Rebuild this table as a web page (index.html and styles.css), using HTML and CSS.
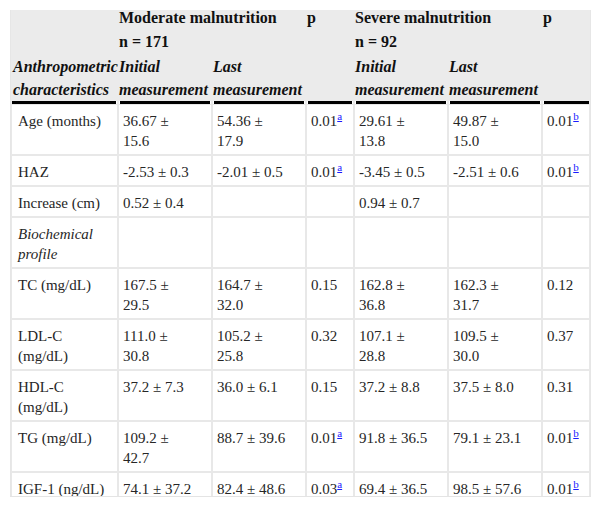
FILE: index.html
```html
<!DOCTYPE html>
<html lang="en">
<head>
<meta charset="utf-8">
<title>Anthropometric characteristics</title>
<link rel="stylesheet" href="styles.css">
</head>
<body>
<div class="table-wrap">
<table class="data">
  <colgroup>
    <col class="c-label">
    <col class="c-val">
    <col class="c-val">
    <col class="c-p">
    <col class="c-val">
    <col class="c-val">
    <col class="c-p">
  </colgroup>
  <thead>
    <tr class="h1">
      <th class="first"></th>
      <th colspan="2">Moderate malnutrition</th>
      <th>p</th>
      <th colspan="2">Severe malnutrition</th>
      <th>p</th>
    </tr>
    <tr class="h2">
      <th class="first"></th>
      <th colspan="2">n = 171</th>
      <th></th>
      <th colspan="2">n = 92</th>
      <th></th>
    </tr>
    <tr class="h3">
      <th class="first">Anthropometric characteristics</th>
      <th>Initial measurement</th>
      <th>Last measurement</th>
      <th></th>
      <th>Initial measurement</th>
      <th>Last measurement</th>
      <th class="last"></th>
    </tr>
  </thead>
  <tbody>
    <tr>
      <td class="label">Age (months)</td>
      <td>36.67 ± 15.6</td>
      <td>54.36 ± 17.9</td>
      <td>0.01<sup><a href="#">a</a></sup></td>
      <td>29.61 ± 13.8</td>
      <td>49.87 ± 15.0</td>
      <td>0.01<sup><a href="#">b</a></sup></td>
    </tr>
    <tr>
      <td class="label">HAZ</td>
      <td>-2.53 ± 0.3</td>
      <td>-2.01 ± 0.5</td>
      <td>0.01<sup><a href="#">a</a></sup></td>
      <td>-3.45 ± 0.5</td>
      <td>-2.51 ± 0.6</td>
      <td>0.01<sup><a href="#">b</a></sup></td>
    </tr>
    <tr>
      <td class="label">Increase (cm)</td>
      <td>0.52 ± 0.4</td>
      <td></td>
      <td></td>
      <td>0.94 ± 0.7</td>
      <td></td>
      <td></td>
    </tr>
    <tr>
      <td class="label"><em>Biochemical profile</em></td>
      <td></td>
      <td></td>
      <td></td>
      <td></td>
      <td></td>
      <td></td>
    </tr>
    <tr>
      <td class="label">TC (mg/dL)</td>
      <td>167.5 ± 29.5</td>
      <td>164.7 ± 32.0</td>
      <td>0.15</td>
      <td>162.8 ± 36.8</td>
      <td>162.3 ± 31.7</td>
      <td>0.12</td>
    </tr>
    <tr>
      <td class="label">LDL-C (mg/dL)</td>
      <td>111.0 ± 30.8</td>
      <td>105.2 ± 25.8</td>
      <td>0.32</td>
      <td>107.1 ± 28.8</td>
      <td>109.5 ± 30.0</td>
      <td>0.37</td>
    </tr>
    <tr>
      <td class="label">HDL-C (mg/dL)</td>
      <td>37.2 ± 7.3</td>
      <td>36.0 ± 6.1</td>
      <td>0.15</td>
      <td>37.2 ± 8.8</td>
      <td>37.5 ± 8.0</td>
      <td>0.31</td>
    </tr>
    <tr>
      <td class="label">TG (mg/dL)</td>
      <td>109.2 ± 42.7</td>
      <td>88.7 ± 39.6</td>
      <td>0.01<sup><a href="#">a</a></sup></td>
      <td>91.8 ± 36.5</td>
      <td>79.1 ± 23.1</td>
      <td>0.01<sup><a href="#">b</a></sup></td>
    </tr>
    <tr>
      <td class="label">IGF-1 (ng/dL)</td>
      <td>74.1 ± 37.2</td>
      <td>82.4 ± 48.6</td>
      <td>0.03<sup><a href="#">a</a></sup></td>
      <td>69.4 ± 36.5</td>
      <td>98.5 ± 57.6</td>
      <td>0.01<sup><a href="#">b</a></sup></td>
    </tr>
  </tbody>
</table>
</div>
</body>
</html>
```

FILE: styles.css
```css
html, body {
  margin: 0;
  padding: 0;
  background: #fff;
}

body {
  font-family: "Liberation Serif", "Times New Roman", serif;
  font-size: 15px;
  color: #262626;
}

.table-wrap {
  margin: 10px 0 0 10px;
  width: 581px;
  height: 487px;
  overflow: hidden;
  box-sizing: border-box;
  border-bottom: 1px solid #e4e4e4;
}

.data {
  width: 581px;
  table-layout: fixed;
  border-collapse: separate;
  border-spacing: 0;
  border-left: 1px solid #e6e6e6;
  border-right: 1px solid #e6e6e6;
}

.c-label { width: 107px; }
.c-val { width: 94px; }
.c-p { width: 48px; }

.data th,
.data td {
  box-sizing: border-box;
  text-align: left;
  vertical-align: top;
}

.data th {
  background: #ebebeb;
  color: #111;
  font-size: 16px;
  font-weight: bold;
  padding: 0;
  border-left: 1px solid #ebebeb;
  border-right: 1px solid #ebebeb;
}

.data th.first {
  padding-left: 1px;
}

.h1 th {
  line-height: 16px;
  padding-bottom: 8px;
}

.h2 th {
  line-height: 16px;
  padding-bottom: 5px;
}

.h3 th {
  font-style: italic;
  line-height: 23px;
  padding-bottom: 3px;
  background:
    linear-gradient(#000, #000) left bottom / calc(100% - 1px) 3px no-repeat,
    linear-gradient(#fff, #fff) left bottom / 100% 3px no-repeat,
    #ebebeb;
}

.h3 th + th {
  background:
    linear-gradient(#000, #000) right 1px bottom / calc(100% - 2px) 3px no-repeat,
    linear-gradient(#fff, #fff) left bottom / 100% 3px no-repeat,
    #ebebeb;
}

.h3 th.last {
  background:
    linear-gradient(#000, #000) right bottom / calc(100% - 1px) 3px no-repeat,
    linear-gradient(#fff, #fff) left bottom / 100% 3px no-repeat,
    #ebebeb;
}

.data td {
  line-height: 20px;
  padding: 6px 16px 3px 4px;
  border: 1px solid #e8e8e8;
}

.data td.label {
  padding-left: 6px;
  padding-right: 4px;
}

.data td em {
  font-style: italic;
}

.data sup {
  font-size: 11px;
  line-height: 0;
  vertical-align: 6px;
}

.data sup a {
  color: #1a1aff;
  text-decoration: underline;
}
```
